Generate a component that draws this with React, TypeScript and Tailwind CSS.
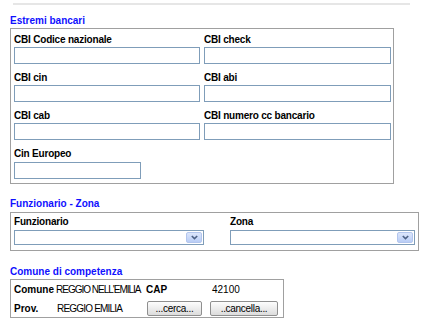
import React from 'react';

// --- Pieces ---
function TextBox({ width }: { width: string }) {
    return <div className={`${width} h-[17px] border border-[#7f9db9] bg-white`} />;
}

function Combo({ width }: { width: string }) {
    return (
        <div className={`${width} h-[15px] border border-[#7f9db9] bg-white flex justify-end p-px`}>
            <div className="w-[16px] h-full rounded-[2px] bg-gradient-to-b from-[#dce6fb] to-[#b9cdf6] border border-[#b3c6ee] flex items-center justify-center">
                <svg width="7" height="5" viewBox="0 0 7 5">
                    <path d="M0.8 1 L3.5 3.6 L6.2 1" fill="none" stroke="#4d6185" strokeWidth="1.6" />
                </svg>
            </div>
        </div>
    );
}

function XpButton({ label, width }: { label: string; width: string }) {
    return (
        <button className={`${width} h-[15px] rounded-[2px] border border-[#8f8f8f] bg-gradient-to-b from-[#fdfdfd] to-[#dcdcdc] text-[10px] leading-[13px] text-black tracking-[-0.3px]`}>
            {label}
        </button>
    );
}

function Heading({ children }: { children: React.ReactNode }) {
    return <div className="pl-[10px] font-bold text-[#1010ff] leading-[12px]">{children}</div>;
}

const BANK_FIELDS = [
    ['CBI Codice nazionale', 'CBI check'],
    ['CBI cin', 'CBI abi'],
    ['CBI cab', 'CBI numero cc bancario'],
];

export default function App() {
    return (
        <div className="w-[441px] h-[325px] bg-white text-black text-[10px] font-['Liberation_Sans',Arial,sans-serif] overflow-hidden">
            {/* top rule */}
            <div className="ml-[13px] mt-[3px] w-[397px] h-[2px] bg-[#e6e6e6]" />

            {/* Estremi bancari */}
            <div className="mt-[10px]">
                <Heading>Estremi bancari</Heading>
            </div>
            <div className="ml-[10px] mt-[1px] w-[384px] h-[156px] border border-[#a0a0a0] pl-[3px] pt-[5px]">
                <div className="grid grid-cols-[186px_187px] gap-x-[4px]">
                    {BANK_FIELDS.map(([left, right]) => (
                        <React.Fragment key={left}>
                            <div className="h-[38px]">
                                <div className="font-bold leading-[12px] tracking-[-0.2px]">{left}</div>
                                <div className="mt-[1px]">
                                    <TextBox width="w-[186px]" />
                                </div>
                            </div>
                            <div className="h-[38px]">
                                <div className="font-bold leading-[12px] tracking-[-0.2px]">{right}</div>
                                <div className="mt-[1px]">
                                    <TextBox width="w-[187px]" />
                                </div>
                            </div>
                        </React.Fragment>
                    ))}
                    <div>
                        <div className="font-bold leading-[12px] tracking-[-0.2px]">Cin Europeo</div>
                        <div className="mt-[2px]">
                            <TextBox width="w-[127px]" />
                        </div>
                    </div>
                </div>
            </div>

            {/* Funzionario - Zona */}
            <div className="mt-[14px]">
                <Heading>Funzionario - Zona</Heading>
            </div>
            <div className="ml-[10px] mt-[2px] w-[409px] h-[39px] border border-[#a0a0a0] pl-[3px] pt-[3px] flex gap-[26px]">
                <div>
                    <div className="font-bold leading-[12px] tracking-[-0.2px]">Funzionario</div>
                    <div className="mt-[2px]">
                        <Combo width="w-[190px]" />
                    </div>
                </div>
                <div>
                    <div className="font-bold leading-[12px] tracking-[-0.2px]">Zona</div>
                    <div className="mt-[2px]">
                        <Combo width="w-[185px]" />
                    </div>
                </div>
            </div>

            {/* Comune di competenza */}
            <div className="mt-[15px]">
                <Heading>Comune di competenza</Heading>
            </div>
            <div className="ml-[10px] mt-[1px] w-[274px] h-[39px] border border-[#a0a0a0] pl-[3px] pt-[4px]">
                <div className="grid grid-cols-[42px_90px_64px_70px] items-center">
                    <div className="font-bold leading-[12px]">Comune</div>
                    <div className="leading-[12px] tracking-[-1px] whitespace-nowrap">REGGIO NELL'EMILIA</div>
                    <div className="font-bold leading-[12px]">CAP</div>
                    <div className="leading-[12px] pl-[2px]">42100</div>
                    <div className="font-bold leading-[12px] mt-[5px]">Prov.</div>
                    <div className="leading-[12px] pl-[1px] tracking-[-0.8px] mt-[5px]">REGGIO EMILIA</div>
                    <div className="pl-[1px] mt-[5px]">
                        <XpButton label="...cerca..." width="w-[55px]" />
                    </div>
                    <div className="mt-[5px]">
                        <XpButton label="..cancella..." width="w-[68px]" />
                    </div>
                </div>
            </div>
        </div>
    );
}
